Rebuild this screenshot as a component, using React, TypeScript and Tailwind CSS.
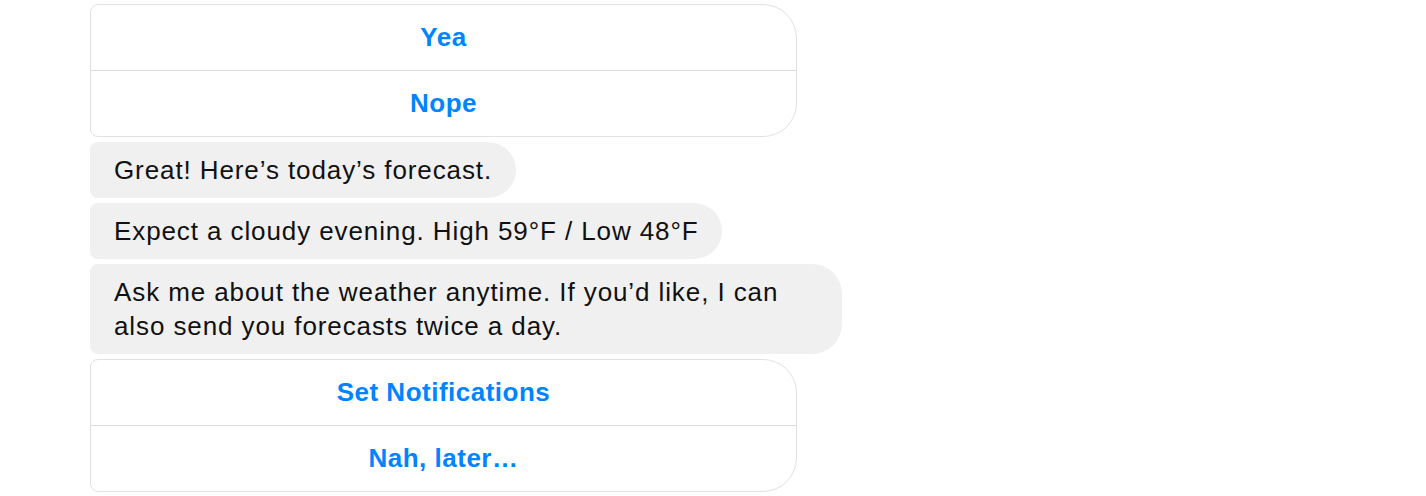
import React from "react";

const font = { fontFamily: '"Liberation Sans", Arial, Helvetica, sans-serif' };

function ButtonCard({ items }: { items: string[] }) {
  return (
    <div className="w-[707px] border border-[#e1e1e1] rounded-l-[8px] rounded-r-[34px] bg-white overflow-hidden">
      {items.map((t, i) => (
        <div
          key={t}
          className={
            i > 0
              ? "h-[66px] flex items-center justify-center border-t border-[#dcdcdc] text-[#0084ff] text-[26px] font-bold tracking-[0.5px]"
              : "h-[65px] flex items-center justify-center text-[#0084ff] text-[26px] font-bold tracking-[0.5px]"
          }
        >
          {t}
        </div>
      ))}
    </div>
  );
}

function Bubble({ children, wide }: { children: React.ReactNode; wide?: boolean }) {
  return (
    <div
      className={
        (wide ? "w-[752px] " : "w-fit ") +
        "bg-[#f0f0f0] rounded-l-[8px] rounded-r-[30px] pl-[24px] pr-[24px] pt-[11px] pb-[11px] text-[26px] leading-[34px] tracking-[0.9px] text-[#111111]"
      }
    >
      {children}
    </div>
  );
}

export default function App() {
  return (
    <div className="w-[1426px] h-[496px] bg-white overflow-hidden" style={font}>
      <div className="pl-[90px] pt-[4px] flex flex-col items-start gap-[5px]">
        <ButtonCard items={["Yea", "Nope"]} />
        <Bubble>Great! Here’s today’s forecast.</Bubble>
        <Bubble>Expect a cloudy evening. High 59°F / Low 48°F</Bubble>
        <Bubble wide>
          Ask me about the weather anytime. If you’d like, I can
          <br />
          also send you forecasts twice a day.
        </Bubble>
        <ButtonCard items={["Set Notifications", "Nah, later…"]} />
      </div>
    </div>
  );
}
